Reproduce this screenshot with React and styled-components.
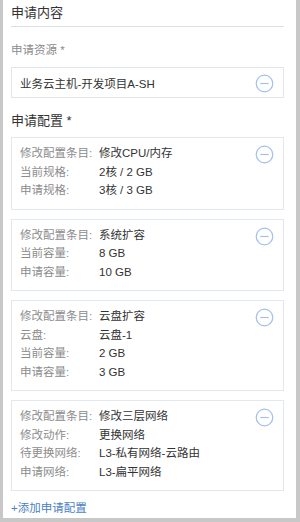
import React from 'react'
import styled, { createGlobalStyle } from 'styled-components'

const GlobalStyle = createGlobalStyle`
  html, body {
    margin: 0;
    padding: 0;
    background: #c8c8c8;
    font-family: 'Liberation Sans', 'Noto Sans CJK SC', sans-serif;
  }
`

const items = [
  {
    rows: [
      ['修改配置条目:', '修改CPU/内存'],
      ['当前规格:', '2核 / 2 GB'],
      ['申请规格:', '3核 / 3 GB'],
    ],
  },
  {
    rows: [
      ['修改配置条目:', '系统扩容'],
      ['当前容量:', '8 GB'],
      ['申请容量:', '10 GB'],
    ],
  },
  {
    rows: [
      ['修改配置条目:', '云盘扩容'],
      ['云盘:', '云盘-1'],
      ['当前容量:', '2 GB'],
      ['申请容量:', '3 GB'],
    ],
  },
  {
    rows: [
      ['修改配置条目:', '修改三层网络'],
      ['修改动作:', '更换网络'],
      ['待更换网络:', 'L3-私有网络-云路由'],
      ['申请网络:', 'L3-扁平网络'],
    ],
  },
]

const RemoveIcon = () => (
  <IconButton aria-label="remove">
    <svg width="19" height="19" viewBox="0 0 19 19">
      <circle cx="9.5" cy="9.5" r="8.3" fill="none" stroke="#a4c0e8" strokeWidth="1.2" />
      <line x1="5.3" y1="9.5" x2="13.7" y2="9.5" stroke="#a4c0e8" strokeWidth="1.2" />
    </svg>
  </IconButton>
)

export default function App() {
  return (
    <>
      <GlobalStyle />
      <Panel>
        <Header>申请内容</Header>
        <FieldLabel>申请资源 *</FieldLabel>
        <ResourceBox>
          <span>业务云主机-开发项目A-SH</span>
          <RemoveIcon />
        </ResourceBox>
        <SectionLabel>申请配置 *</SectionLabel>
        <CardList>
          {items.map((item, i) => (
            <Card key={i}>
              <Rows>
                {item.rows.map(([k, v]) => (
                  <React.Fragment key={k}>
                    <Key>{k}</Key>
                    <Value>{v}</Value>
                  </React.Fragment>
                ))}
              </Rows>
              <RemoveIcon />
            </Card>
          ))}
        </CardList>
        <AddLink>+添加申请配置</AddLink>
      </Panel>
    </>
  )
}

const Panel = styled.div`
  box-sizing: border-box;
  background: #fff;
  margin: 0 4px 0 3px;
  height: 518px;
  padding: 0 12px 0 8px;
  display: flex;
  flex-direction: column;
`

const Header = styled.div`
  font-size: 13px;
  line-height: 26px;
  color: #333;
  border-bottom: 1px solid #dcdfe4;
`

const FieldLabel = styled.div`
  margin-top: 14px;
  font-size: 11.5px;
  line-height: 18px;
  color: #8c8c8c;
`

const ResourceBox = styled.div`
  box-sizing: border-box;
  margin-top: 8px;
  height: 31px;
  border: 1px solid #e1e5ec;
  display: flex;
  align-items: center;
  justify-content: space-between;
  padding: 0 9px 0 8px;
  font-size: 11.5px;
  color: #333;
`

const SectionLabel = styled.div`
  margin-top: 14px;
  font-size: 13px;
  line-height: 18px;
  color: #333;
`

const CardList = styled.div`
  margin-top: 7px;
  display: flex;
  flex-direction: column;
  gap: 9px;
`

const Card = styled.div`
  border: 1px solid #e3e7ee;
  padding: 6px 9px 9px 8px;
  display: flex;
  justify-content: space-between;
  align-items: flex-start;
`

const Rows = styled.div`
  display: grid;
  grid-template-columns: 79px 1fr;
  font-size: 11.5px;
  line-height: 18.5px;
`

const Key = styled.div`
  color: #8c8c8c;
`

const Value = styled.div`
  color: #333;
`

const IconButton = styled.span`
  display: flex;
  margin-top: 1px;
`

const AddLink = styled.div`
  margin-top: 8px;
  font-size: 11.5px;
  line-height: 18px;
  color: #4a7fc4;
`
